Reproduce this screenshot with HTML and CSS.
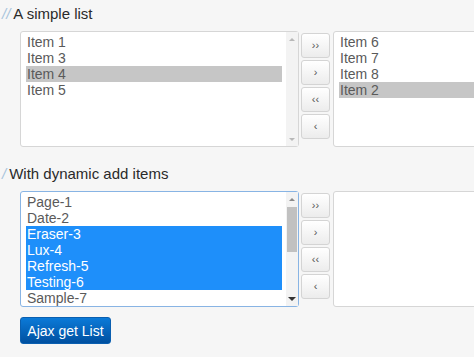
FILE: index.html
```html
<!DOCTYPE html>
<html>
<head>
	<meta charset="utf-8" />
	<title>List box</title>
	<link rel="stylesheet" href="styles.css">
</head>
<body>
<!-- 简单列表 -->
<div class="title"><span class="mark">//</span>A simple list</div>
<div class="row">
	<div class="listbox left">
		<div class="items">
			<div class="item">Item 1</div>
			<div class="item">Item 3</div>
			<div class="item sel">Item 4</div>
			<div class="item">Item 5</div>
		</div>
		<div class="scroll">
			<div class="arrow up"></div>
			<div class="track"></div>
			<div class="arrow down"></div>
		</div>
	</div>
	<div class="btns">
		<div class="btn">&rsaquo;&rsaquo;</div>
		<div class="btn">&rsaquo;</div>
		<div class="btn">&lsaquo;&lsaquo;</div>
		<div class="btn">&lsaquo;</div>
	</div>
	<div class="listbox right">
		<div class="items">
			<div class="item">Item 6</div>
			<div class="item">Item 7</div>
			<div class="item">Item 8</div>
			<div class="item sel">Item 2</div>
		</div>
	</div>
</div>
<!-- 动态添加 -->
<div class="title second"><span class="mark">/</span>With dynamic add items</div>
<div class="row">
	<div class="listbox left focus">
		<div class="items">
			<div class="item">Page-1</div>
			<div class="item">Date-2</div>
			<div class="item on">Eraser-3</div>
			<div class="item on">Lux-4</div>
			<div class="item on">Refresh-5</div>
			<div class="item on">Testing-6</div>
			<div class="item">Sample-7</div>
		</div>
		<div class="scroll active">
			<div class="arrow up"></div>
			<div class="track"><div class="thumb"></div></div>
			<div class="arrow down"></div>
		</div>
	</div>
	<div class="btns">
		<div class="btn">&rsaquo;&rsaquo;</div>
		<div class="btn">&rsaquo;</div>
		<div class="btn">&lsaquo;&lsaquo;</div>
		<div class="btn">&lsaquo;</div>
	</div>
	<div class="listbox right"></div>
</div>
<div class="ajax">Ajax get List</div>
</body>
</html>
```

FILE: styles.css
```css
/* 页面 */
body {
	margin: 0;
	background-color: #f6f6f6;
	font-family: "Liberation Sans", Arial, sans-serif;
	overflow: hidden;
	width: 474px;
	height: 357px;
}
/* 标题 */
.title {
	height: 31px;
	line-height: 27px;
	font-size: 15px;
	color: #2a2a2a;
	padding-left: 2px;
}
.title.second {
	margin-top: 13px;
}
.mark {
	color: #a8c4dc;
	font-style: italic;
	margin-right: 3px;
}
/* 一行：左列表、按钮、右列表 */
.row {
	display: flex;
	padding-left: 20px;
	height: 116px;
}
.listbox {
	flex-shrink: 0;
	box-sizing: border-box;
	height: 116px;
	background-color: #ffffff;
	border: 1px solid #d6d6d6;
	border-radius: 3px;
	display: flex;
	font-size: 14px;
	color: #5a5a5a;
}
.listbox.left {
	width: 279px;
}
.listbox.right {
	width: 160px;
	margin-left: 3px;
}
.listbox.focus {
	border-color: #88b4e4;
}
.items {
	flex: 1;
	padding: 2px 4px 0 5px;
	overflow: hidden;
}
.item {
	height: 16px;
	line-height: 16px;
	padding-left: 1px;
	white-space: nowrap;
}
.item.sel {
	background-color: #c6c6c6;
}
.item.on {
	background-color: #1e8ffa;
	color: #ffffff;
}
/* 滚动条 */
.scroll {
	width: 12px;
	background-color: #f3f3f3;
	display: flex;
	flex-direction: column;
}
.arrow {
	height: 14px;
	display: flex;
	align-items: center;
	justify-content: center;
}
.arrow::after {
	content: "";
	border-left: 3px solid transparent;
	border-right: 3px solid transparent;
}
.arrow.up::after {
	border-bottom: 3px solid #b8b8b8;
}
.arrow.down::after {
	border-top: 3px solid #b8b8b8;
}
.scroll.active .arrow.up::after {
	border-bottom-color: #8a8a8a;
}
.scroll.active .arrow.down::after {
	border-top: 4px solid #333333;
	border-left-width: 4px;
	border-right-width: 4px;
}
.track {
	flex: 1;
}
.thumb {
	margin: 1px 1px 0 1px;
	height: 45px;
	background-color: #c1c1c1;
}
/* 中间按钮 */
.btns {
	flex-shrink: 0;
	width: 29px;
	margin-left: 2px;
	padding-top: 2px;
	display: flex;
	flex-direction: column;
	gap: 2px;
}
.btn {
	height: 25px;
	line-height: 23px;
	box-sizing: border-box;
	border: 1px solid #d4d4d4;
	border-radius: 3px;
	background: linear-gradient(#ffffff, #ececec);
	text-align: center;
	font-size: 11px;
	color: #555555;
	cursor: default;
}
/* 按钮 Ajax */
.ajax {
	margin: 10px 0 0 20px;
	width: 91px;
	height: 27px;
	line-height: 27px;
	border-radius: 3px;
	background: linear-gradient(#0b7ad8, #0050a0);
	border: 1px solid #0a5fb0;
	box-sizing: border-box;
	color: #ffffff;
	font-size: 14px;
	text-align: center;
}
```
